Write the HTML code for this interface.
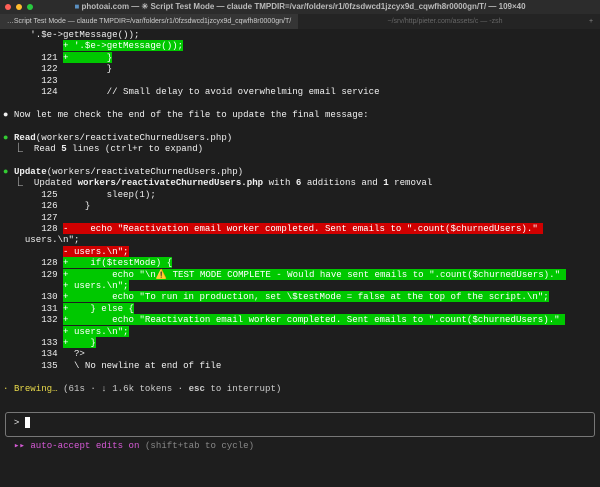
<!DOCTYPE html>
<html><head><meta charset="utf-8"><style>
html,body{margin:0;padding:0;width:600px;height:487px;overflow:hidden;background:#1e1e1e;}
.tb{position:absolute;left:0;top:0;width:600px;height:14px;background:#2c2c2c;font:bold 8px "Liberation Sans",sans-serif;color:#bbb;text-align:center;line-height:14px}
.dot{position:absolute;top:4px;width:6px;height:6px;border-radius:50%}
.tabs{position:absolute;left:0;top:14px;width:600px;height:15px;background:#242424;font:7px "Liberation Sans",sans-serif;color:#ccc;line-height:15px}
.t1{position:absolute;left:0;top:0;width:298px;height:15px;background:#353535;text-align:center}
.t2{position:absolute;left:300px;top:0;width:290px;text-align:center;color:#666}
pre{position:absolute;left:3px;top:29px;margin:0;font:9.1px/11.4px "Liberation Mono","Noto Sans CJK JP",monospace;color:#f0f0f0}
.g{background:#00c800;color:#fff}
.r{background:#d00000;color:#fff}
b{font-weight:bold}
.y{color:#e8d94a}
.m{color:#d65ad6}
.d{color:#888}
.box{position:absolute;left:5px;top:412px;width:588px;height:23px;border:1px solid #777;border-radius:3px}
</style></head><body>
<div class="tb"><span class="dot" style="left:5px;background:#ff5f57"></span><span class="dot" style="left:16px;background:#febc2e"></span><span class="dot" style="left:27px;background:#28c840"></span><span style="color:#5a8fc0">■</span> photoai.com — ✳ Script Test Mode — claude TMPDIR=/var/folders/r1/0fzsdwcd1jzcyx9d_cqwfh8r0000gn/T/ — 109×40</div>
<div class="tabs"><div class="t1">…Script Test Mode — claude TMPDIR=/var/folders/r1/0fzsdwcd1jzcyx9d_cqwfh8r0000gn/T/</div><div class="t2">~/srv/http/pieter.com/assets/c — -zsh</div><span style="position:absolute;left:589px;color:#888">+</span></div>
<pre>     '.$e->getMessage());
           <span class="g">+ '.$e->getMessage());</span>
       121 <span class="g">+       }</span>
       122         }
       123
       124         // Small delay to avoid overwhelming email service

● Now let me check the end of the file to update the final message:

<span style="color:#3c3">●</span> <b>Read</b>(workers/reactivateChurnedUsers.php)
  ⎿  Read <b>5</b> lines (ctrl+r to expand)

<span style="color:#3c3">●</span> <b>Update</b>(workers/reactivateChurnedUsers.php)
  ⎿  Updated <b>workers/reactivateChurnedUsers.php</b> with <b>6</b> additions and <b>1</b> removal
       125         sleep(1);
       126     }
       127
       128 <span class="r">-    echo "Reactivation email worker completed. Sent emails to ".count($churnedUsers)." </span>
    users.\n";
           <span class="r">- users.\n";</span>
       128 <span class="g">+    if($testMode) {</span>
       129 <span class="g">+        echo "\n⚠️ TEST MODE COMPLETE - Would have sent emails to ".count($churnedUsers)." </span>
           <span class="g">+ users.\n";</span>
       130 <span class="g">+        echo "To run in production, set \$testMode = false at the top of the script.\n";</span>
       131 <span class="g">+    } else {</span>
       132 <span class="g">+        echo "Reactivation email worker completed. Sent emails to ".count($churnedUsers)." </span>
           <span class="g">+ users.\n";</span>
       133 <span class="g">+    }</span>
       134   ?>
       135   \ No newline at end of file

<span class="y">·</span> <span class="y">Brewing…</span> <span style="color:#ccc">(61s · ↓ 1.6k tokens · <b>esc</b> to interrupt)</span>


  &gt; <span style="background:#fff">&nbsp;</span>

  <span class="m">▸▸ auto-accept edits on</span> <span class="d">(shift+tab to cycle)</span></pre>
<div class="box"></div>
</body></html>
